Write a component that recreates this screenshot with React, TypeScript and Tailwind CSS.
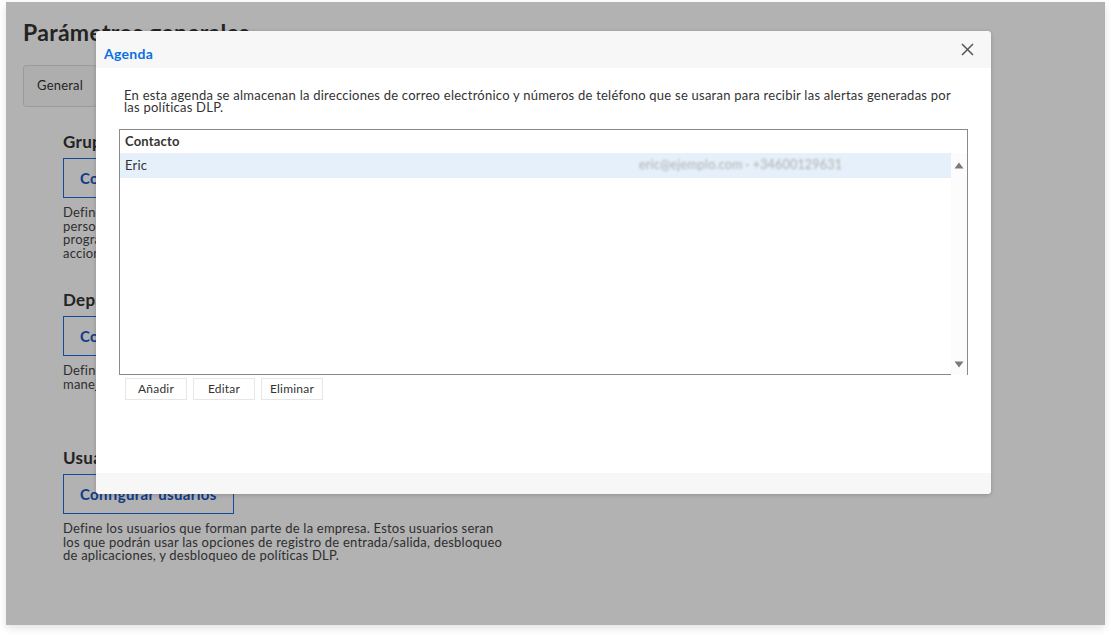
const FONT = "font-['Lato','Open_Sans',sans-serif]";

const SECTIONS = [
  {
    title: "Grupos",
    button: "Configurar grupos",
    lines: [
      "Define los grupos de trabajo de la empresa y sus miembros,",
      "personas que comparten las mismas políticas y horarios",
      "programados, para poder aplicarles de forma conjunta",
      "acciones de bloqueo y desbloqueo.",
    ],
  },
  {
    title: "Departamentos",
    button: "Configurar departamentos",
    lines: [
      "Define los departamentos de la empresa para organizar y",
      "manejar los equipos de cada área.",
    ],
  },
  {
    title: "Usuarios",
    button: "Configurar usuarios",
    lines: [
      "Define los usuarios que forman parte de la empresa. Estos usuarios seran",
      "los que podrán usar las opciones de registro de entrada/salida, desbloqueo",
      "de aplicaciones, y desbloqueo de políticas DLP.",
    ],
  },
];

function Triangle({ down }: { down?: boolean }) {
  return (
    <svg width="10" height="7" viewBox="0 0 10 7" className="block">
      {down ? <path d="M0.5 0.5h9L5 6.5z" fill="#7a7a7a" /> : <path d="M0.5 6.5h9L5 0.5z" fill="#7a7a7a" />}
    </svg>
  );
}

function AgendaModal() {
  return (
    <div className="absolute left-[90px] top-[29px] flex h-[463px] w-[895px] flex-col overflow-hidden rounded-[4px] bg-white shadow-[0_1px_4px_rgba(0,0,0,0.2)]">
      {/* header */}
      <div className="relative h-[37px] shrink-0 bg-[#f7f7f7] px-[8px] pt-[15px]">
        <span className="block text-[14px] font-bold leading-[16px] tracking-[0.3px] text-[#0a6fe3]">Agenda</span>
        <svg
          width="13"
          height="13"
          viewBox="0 0 13 13"
          className="absolute right-[17px] top-[12px]"
        >
          <path d="M1 1l11 11M12 1L1 12" stroke="#555" strokeWidth="1.5" fill="none" />
        </svg>
      </div>

      {/* body */}
      <div className="flex-1 px-[23px] pt-[21px]">
        <p className="pl-[5px] text-[13px] leading-[12px] tracking-[0.24px] text-[#333]">
          <span className="whitespace-nowrap">
            En esta agenda se almacenan la direcciones de correo electrónico y números de teléfono que se usaran para recibir las alertas generadas por
          </span>
          <br />
          las políticas DLP.
        </p>

        <div className="mt-[16px] flex h-[246px] flex-col border-x border-t border-[#8a8a8a]">
          <div className="flex h-[23px] shrink-0 items-center px-[5px] text-[13px] font-bold tracking-[0.2px] text-[#333]">
            Contacto
          </div>
          <div className="flex flex-1">
            <div className="flex-1 border-b border-[#8a8a8a]">
              <div className="flex h-[25px] items-center bg-[#e5f0fa] px-[5px] text-[13px] tracking-[0.2px] text-[#333]">
                <span className="w-[514px]">Eric</span>
                <span className="text-[12.5px] text-[#b0b0b0] blur-[1.2px]">eric@ejemplo.com · +34600129631</span>
              </div>
            </div>
            <div className="flex w-[16px] flex-col items-center justify-between bg-[#fcfcfc] pb-[7px] pt-[9px]">
              <Triangle />
              <Triangle down />
            </div>
          </div>
        </div>

        <div className="ml-[6px] mt-[3px] flex gap-[6px]">
          {["Añadir", "Editar", "Eliminar"].map((b) => (
            <button
              key={b}
              className="h-[22px] w-[62px] border border-[#e6e6e6] bg-white text-[12px] tracking-[0.2px] text-[#333]"
            >
              {b}
            </button>
          ))}
        </div>
      </div>

      {/* footer */}
      <div className="h-[21px] shrink-0 bg-[#f7f7f7]" />
    </div>
  );
}

export default function App() {
  return (
    <div className={`h-[637px] w-[1111px] bg-white pl-[6px] pt-[2px] ${FONT}`}>
      <div className="relative h-[623px] w-[1099px] overflow-hidden bg-white shadow-[0_3px_8px_rgba(0,0,0,0.12)]">
        {/* page underneath */}
        <div className="pl-[17px] pt-[16px]">
          <h1 className="text-[23px] font-bold leading-[28px] tracking-[0.3px] text-[#333]">Parámetros generales</h1>
          <div className="mt-[19px] flex">
            <div className="flex h-[42px] w-[74px] items-center justify-center rounded-[3px] border border-[#ddd] bg-[#fafafa] text-[13px] tracking-[0.2px] text-[#333]">
              General
            </div>
            <div className="flex h-[42px] items-center px-[16px] text-[13px] text-[#333]">Agenda</div>
          </div>

          <div className="mt-[25px] pl-[40px]">
            {SECTIONS.map((s) => (
              <div key={s.title} className="h-[158px]">
                <h2 className="text-[17px] font-bold leading-[20px] tracking-[0.3px] text-[#333]">{s.title}</h2>
                <div className="mt-[6px] inline-flex h-[40px] items-center border border-[#1e6ce0] px-[16px] text-[15px] font-bold tracking-[0.35px] text-[#1556c8]">
                  {s.button}
                </div>
                <p className="mt-[8px] text-[13px] leading-[13.5px] tracking-[0.22px] text-[#444]">
                  {s.lines.map((l, i) => (
                    <span key={i} className="block">
                      {l}
                    </span>
                  ))}
                </p>
              </div>
            ))}
          </div>
        </div>

        {/* backdrop */}
        <div className="absolute inset-0 bg-black/30" />

        <AgendaModal />
      </div>
    </div>
  );
}
